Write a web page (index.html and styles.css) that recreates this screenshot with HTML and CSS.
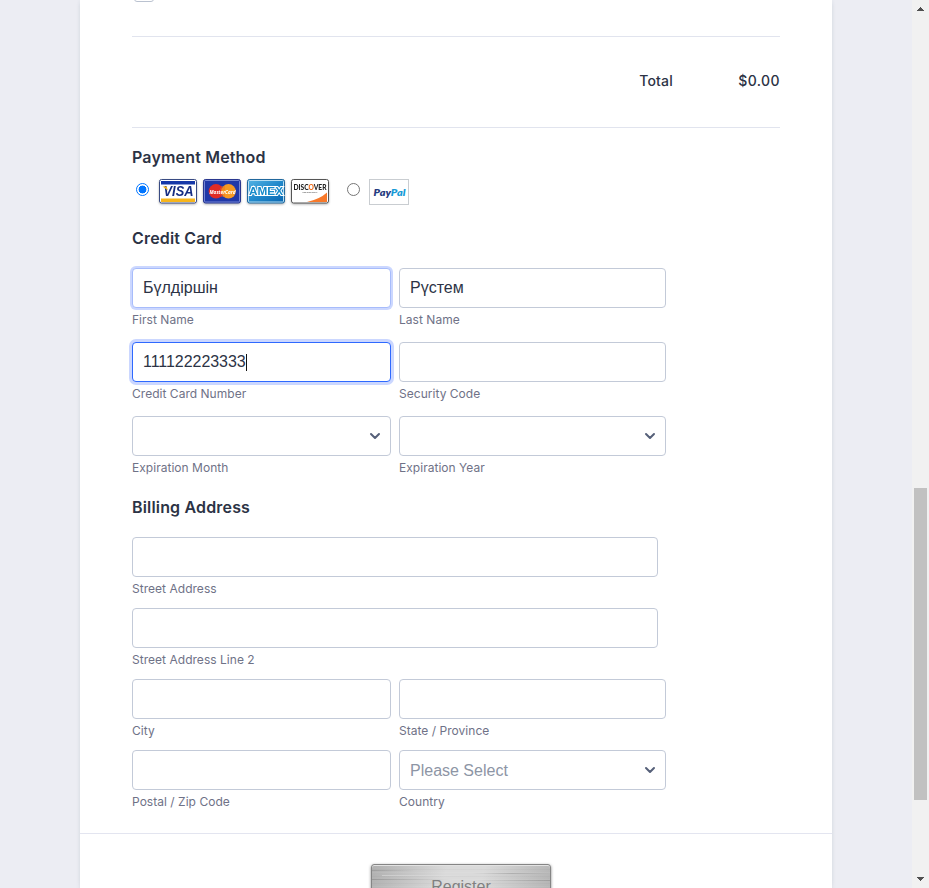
FILE: index.html
```html
<!DOCTYPE html>
<html lang="en">
<head>
<meta charset="utf-8">
<title>Registration Form</title>
<link rel="stylesheet" href="styles.css">
</head>
<body>
<div class="viewport">
  <main class="page">
    <form class="form">
      <div class="option"><span class="checkbox"></span></div>
      <div class="total"><span class="total-label">Total</span><span class="total-value">$0.00</span></div>

      <h2 class="heading payment-heading">Payment Method</h2>
      <div class="methods">
        <span class="radio checked"></span>
        <svg class="card visa" viewBox="0 0 38 25">
          <rect x=".5" y=".5" width="37" height="23.5" rx="2" fill="#fff" stroke="#394b83"/>
          <path d="M2 2h34v3.500H2z" fill="#1638a8"/><path d="M2 19.500h34v3.500H2z" fill="#f7b51c"/>
          <text x="4.5" y="17.2" textLength="30" lengthAdjust="spacingAndGlyphs" class="logo-visa">VISA</text>
          <path d="M3.500 7.500h4l1.500 4z" fill="#f7b51c"/>
        </svg>
        <svg class="card" viewBox="0 0 38 25">
          <rect x=".5" y=".5" width="37" height="23.5" rx="2" fill="#2038a8" stroke="#29378f"/>
          <rect x="1.5" y="1.500" width="35" height="21.5" rx="1" fill="none" stroke="#8c9be0" stroke-width=".8"/>
          <circle cx="13" cy="12.3" r="7.3" fill="#e02b25"/><circle cx="25.500" cy="12.3" r="7.3" fill="#f59a23"/>
          <path d="M18 8h4M17 10h5M17 15h5M18 17h4" stroke="#ed6b20" stroke-width=".8"/>
          <text x="6.5" y="14.500" textLength="26" lengthAdjust="spacingAndGlyphs" class="logo-master">MasterCard</text>
        </svg>
        <svg class="card" viewBox="0 0 38 25">
          <defs><linearGradient id="amex" x2="1" y2="1"><stop stop-color="#55b5e5"/><stop offset=".5" stop-color="#2189cb"/><stop offset="1" stop-color="#0865b0"/></linearGradient></defs>
          <rect x=".5" y=".5" width="37" height="23.5" rx="2" fill="url(#amex)" stroke="#21689d"/>
          <rect x="1.5" y="1.5" width="35" height="21.5" rx="1" fill="none" stroke="#b6def3"/>
          <text x="2" y="16.2" textLength="34" lengthAdjust="spacingAndGlyphs" class="logo-amex">AMEX</text>
        </svg>
        <svg class="card" viewBox="0 0 38 25">
          <rect x=".5" y=".5" width="37" height="23.5" rx="2" fill="#fff" stroke="#555"/>
          <path d="M36 13.500V23H16Q29 20 36 13.500" fill="#f8792a"/>
          <text x="2.5" y="10.7" textLength="33" lengthAdjust="spacingAndGlyphs" class="logo-discover">DISC<tspan fill="#f06a16">O</tspan>VER</text>
          <text x="11.5" y="13.8" textLength="15" lengthAdjust="spacingAndGlyphs" class="logo-network">NETWORK</text>
        </svg>
        <span class="radio second"></span>
        <svg class="paypal" viewBox="0 0 40 26">
          <rect x=".5" y=".5" width="39" height="25" fill="#fff" stroke="#c9cdd1"/>
          <text x="4.5" y="17" textLength="32" lengthAdjust="spacingAndGlyphs" class="logo-paypal">Pay<tspan fill="#179bd7">Pal</tspan></text>
        </svg>
      </div>

      <h2 class="heading credit-heading">Credit Card</h2>
      <div class="grid credit">
        <label class="cell"><span class="field halo">Бүлдіршін</span><span class="caption">First Name</span></label>
        <label class="cell"><span class="field">Рүстем</span><span class="caption">Last Name</span></label>
        <label class="cell"><span class="field focused"><span class="digits">111122223333</span><i class="caret"></i></span><span class="caption">Credit Card Number</span></label>
        <label class="cell"><span class="field"></span><span class="caption">Security Code</span></label>
        <label class="cell"><span class="field select"><svg class="chevron" viewBox="0 0 12 8"><path d="M2 2l4 4 4-4"/></svg></span><span class="caption">Expiration Month</span></label>
        <label class="cell"><span class="field select"><svg class="chevron" viewBox="0 0 12 8"><path d="M2 2l4 4 4-4"/></svg></span><span class="caption">Expiration Year</span></label>
      </div>

      <h2 class="heading billing-heading">Billing Address</h2>
      <div class="grid billing">
        <label class="cell wide"><span class="field"></span><span class="caption">Street Address</span></label>
        <label class="cell wide"><span class="field"></span><span class="caption">Street Address Line 2</span></label>
        <label class="cell"><span class="field"></span><span class="caption">City</span></label>
        <label class="cell"><span class="field"></span><span class="caption">State / Province</span></label>
        <label class="cell"><span class="field"></span><span class="caption">Postal / Zip Code</span></label>
        <label class="cell"><span class="field select"><span class="placeholder">Please Select</span><svg class="chevron" viewBox="0 0 12 8"><path d="M2 2l4 4 4-4"/></svg></span><span class="caption">Country</span></label>
      </div>

      <div class="actions"><button type="button" class="register">Register</button></div>
    </form>
  </main>
  <div class="scrollbar">
    <svg class="arrow" viewBox="0 0 17 17"><path d="M5 11h7V10h-1V9h-1V8H9V7H8v1H7v1H6v1H5z"/></svg>
    <div class="thumb"></div>
    <svg class="arrow bottom" viewBox="0 0 17 17"><path d="M5 6h7v1h-1v1h-1v1H9v1H8V9H7V8H6V7H5z"/></svg>
  </div>
</div>
</body>
</html>
```
FILE: styles.css
```css
* { box-sizing: border-box; }
body { margin: 0; overflow: hidden; font-family: Inter, "Liberation Sans", sans-serif; }
.viewport { display: flex; height: 888px; overflow: hidden; }
.page { width: 912px; background: #ecedf3; }
.form {
  width: 752px;
  height: 888px;
  margin: 0 auto;
  background: #fff;
  box-shadow: 0 4px 4px rgba(87, 100, 126, .13), 0 -4px 4px rgba(87, 100, 126, .05);
}
.option { height: 37px; margin: 0 52px; border-bottom: 1px solid #e1e4ee; }
.checkbox { display: block; width: 20px; height: 20px; margin: 0 0 0 2px; transform: translateY(-18px); border: 1px solid #bac2d0; border-radius: 3px; }
.total { display: flex; justify-content: flex-end; height: 91px; margin: 0 52px; padding-top: 34px; border-bottom: 1px solid #e1e4ee; color: #2c3345; font-size: 14px; font-weight: 500; line-height: 20px; letter-spacing: .2px; }
.total-value { width: 107px; text-align: right; letter-spacing: .4px; }
.heading { height: 20px; margin: 0 52px; color: #2c3345; font-size: 16px; font-weight: 600; line-height: 20px; letter-spacing: .17px; }
.payment-heading { margin-top: 19px; }
.methods { display: flex; height: 26px; margin: 12px 52px 0; padding-left: 4px; }
.radio { width: 13px; height: 13px; margin-top: 4px; border: 1px solid #767676; border-radius: 50%; }
.checked { margin-right: 10px; border-color: #0075ff; background: radial-gradient(circle, #0075ff 0 3.7px, #fff 4.2px); }
.second { margin: 4px 9px 0 12px; }
.card { width: 38px; height: 25px; margin-right: 6px; filter: drop-shadow(0 1px 1px rgba(0, 0, 0, .3)); }
.paypal { width: 40px; height: 26px; }
.logo-visa { fill: #172e83; font: italic bold 14px "Liberation Sans", sans-serif; }
.logo-master { fill: #fff; font: italic 700 5.5px "Open Sans", sans-serif; }
.logo-amex { fill: #178bca; stroke: #fff; stroke-width: 2px; paint-order: stroke; font: bold 11px "Liberation Sans", sans-serif; }
.logo-discover { fill: #222; font: 900 7.5px Lato, sans-serif; }
.logo-network { fill: #666; font: bold 2.5px "Liberation Sans", sans-serif; }
.logo-paypal { fill: #253b80; font: italic 800 9.5px Lato, "Open Sans", sans-serif; }
.credit-heading { margin-top: 23px; }
.grid { display: grid; grid-template-columns: 259px 267px; column-gap: 8px; margin: 20px 52px 0; }
.credit { grid-auto-rows: 74px; }
.billing { grid-auto-rows: 71px; }
.wide { grid-column: 1 / -1; width: 526px; }
.field { display: flex; align-items: center; height: 40px; padding: 0 10px; border: 1px solid #c3cad8; border-radius: 4px; background: #fff; color: #2c3345; font: 16px/38px "Liberation Sans", Arial, sans-serif; }
.halo { border-color: #a7bcfb; box-shadow: 0 0 0 2px #cbd7ff; }
.focused { border-color: #2e69ff; box-shadow: 0 0 0 3px #cbd7ff; }
.digits { letter-spacing: -.05px; }
.caret { width: 1px; height: 17px; background: #111; }
.caption { display: block; margin-top: 4px; color: #6f7287; font-size: 12px; line-height: 16px; letter-spacing: .03px; }
.select { justify-content: space-between; padding-right: 9px; }
.chevron { width: 12px; height: 8px; margin-left: auto; fill: none; stroke: #566079; stroke-width: 2; stroke-linecap: round; stroke-linejoin: round; }
.placeholder { padding-top: 2px; line-height: 36px; color: #8d95a5; }
.billing-heading { margin-top: 7px; }
.actions { height: 55px; margin-top: 12px; padding: 30px 0 0 291px; border-top: 1px solid #e3e5f0; }
.register {
  display: block;
  width: 180px;
  height: 44px;
  padding: 1px 0 0;
  border: 1px solid #858585;
  border-radius: 3px;
  color: #808080;
  font: 16px "Liberation Sans", Arial, sans-serif;
  text-shadow: 0 1px 0 #ddd;
  background:
    linear-gradient(90deg, rgba(110, 110, 110, .3), transparent 45%) 0 5px / 95px 1px no-repeat,
    linear-gradient(90deg, transparent, rgba(110, 110, 110, .3), transparent) 100px 8px / 80px 1px no-repeat,
    linear-gradient(90deg, rgba(110, 110, 110, .4), transparent) 0 14px / 80px 1px no-repeat,
    linear-gradient(90deg, transparent, rgba(110, 110, 110, .35)) 100px 15px / 80px 1px no-repeat,
    linear-gradient(90deg, rgba(255, 255, 255, .3), transparent) 10px 10px / 90px 1px no-repeat,
    repeating-linear-gradient(rgba(255, 255, 255, .06) 0 1px, transparent 1px 4px, rgba(80, 80, 80, .04) 4px 5px, transparent 5px 7px),
    linear-gradient(105deg, #b0b0b0, #dadada 40%, #dadada 60%, #b2b2b2);
  box-shadow: inset 0 1px 0 #e2e2e2, 0 1px 3px rgba(0, 0, 0, .5);
}
.scrollbar { display: flex; flex-direction: column; width: 17px; height: 888px; background: #f1f1f1; }
.arrow { width: 17px; height: 17px; fill: #505050; }
.thumb { width: 13px; height: 312px; margin: 471px 2px 0; background: #c1c1c1; }
.bottom { margin-top: auto; }
```
